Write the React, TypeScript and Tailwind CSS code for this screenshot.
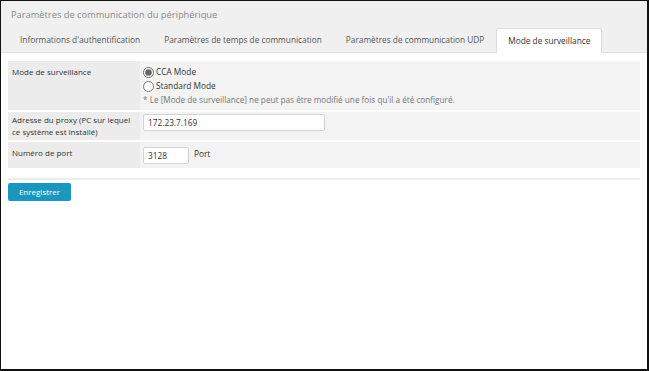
import { useState } from 'react';

const tabs = [
  "Informations d'authentification",
  'Paramètres de temps de communication',
  'Paramètres de communication UDP',
  'Mode de surveillance',
];

export default function App() {
  const [active, setActive] = useState(3);
  const [mode, setMode] = useState<'cca' | 'standard'>('cca');

  return (
    <div className="w-[649px] h-[371px] bg-white border-l border-t border-r-2 border-b-2 border-[#111] font-['Open_Sans',sans-serif] text-[8px] text-[#333] overflow-hidden flex flex-col">
      {/* header + tabs */}
      <div className="bg-[#f0f0f0] border-b border-[#dcdcdc]">
        <div className="px-[10px] pt-[7px] h-[27px] text-[9.3px] text-[#8a8a8a] leading-[13px]">
          Paramètres de communication du périphérique
        </div>
        <div className="flex pl-[7px] h-[24px]">
          {tabs.map((t, i) => (
            <button
              key={t}
              onClick={() => setActive(i)}
              className={
                i === active
                  ? 'px-[11px] whitespace-nowrap text-[8.3px] bg-white rounded-t-[3px] border border-b-0 border-[#dcdcdc] text-[#333] -mb-px'
                  : 'px-[12px] whitespace-nowrap text-[8.3px] text-[#555]'
              }
            >
              {t}
            </button>
          ))}
        </div>
      </div>

      {/* form table */}
      <div className="px-[7px] pt-[8px]">
        <div className="flex flex-col gap-[2px]">
          <div className="flex h-[49px]">
            <div className="w-[132px] bg-[#ececec] px-[4px] pt-[5px]">Mode de surveillance</div>
            <div className="flex-1 bg-[#f3f3f3] px-[3px] pt-[4px] flex flex-col leading-[14px]">
              <label className="flex items-center gap-[2px] text-[8.3px]">
                <input type="radio" name="mode" checked={mode === 'cca'} onChange={() => setMode('cca')} className="w-[11px] h-[11px] m-0 accent-[#666]" />
                <span>CCA Mode</span>
              </label>
              <label className="flex items-center gap-[2px] text-[8.3px]">
                <input type="radio" name="mode" checked={mode === 'standard'} onChange={() => setMode('standard')} className="w-[11px] h-[11px] m-0 accent-[#666]" />
                <span>Standard Mode</span>
              </label>
              <span className="text-[8.2px] text-[#777]">* Le [Mode de surveillance] ne peut pas être modifié une fois qu'il a été configuré.</span>
            </div>
          </div>
          <div className="flex h-[28px]">
            <div className="w-[132px] bg-[#ececec] px-[4px] pt-[2px] leading-[12px]">
              Adresse du proxy (PC sur lequel ce système est installé)
            </div>
            <div className="flex-1 bg-[#f3f3f3] px-[3px] pt-[2px]">
              <input defaultValue="172.23.7.169" className="w-[182px] h-[17px] bg-white border border-[#d4d4d4] rounded-[2px] px-[4px] outline-none text-[8.3px]" />
            </div>
          </div>
          <div className="flex h-[26px]">
            <div className="w-[132px] bg-[#ececec] px-[4px] pt-[5px]">Numéro de port</div>
            <div className="flex-1 bg-[#f3f3f3] px-[3px] pt-[5px] flex items-start gap-[5px]">
              <input defaultValue="3128" className="w-[46px] h-[17px] bg-white border border-[#d4d4d4] rounded-[2px] px-[4px] outline-none text-[8.3px]" />
              <span className="pt-[1px] text-[8.3px]">Port</span>
            </div>
          </div>
        </div>
        <div className="border-t-2 border-[#ececec] mt-[10px] pt-[3px]">
          <button className="w-[63px] h-[18px] bg-[#1b97bf] text-white rounded-[2px] text-[8px]">Enregistrer</button>
        </div>
      </div>
    </div>
  );
}
